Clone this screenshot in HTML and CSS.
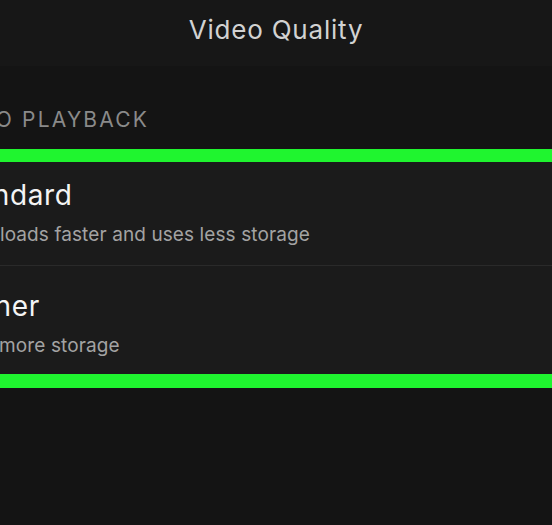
FILE: index.html
```html
<!DOCTYPE html>
<html lang="en">
<head>
  <meta charset="UTF-8" />
  <meta name="viewport" content="width=device-width, initial-scale=1" />
  <title>Video Quality</title>
  <link rel="stylesheet" href="styles.css">
</head>
<body>
  <header class="topbar">
    <h1>Video Quality</h1>
  </header>

  <main class="content">
    <h2 class="section-label">VIDEO PLAYBACK</h2>

    <div class="options">
      <div class="option">
        <div class="option-title">Standard</div>
        <div class="option-desc">Downloads faster and uses less storage</div>
      </div>
      <div class="option">
        <div class="option-title">Higher</div>
        <div class="option-desc">Uses more storage</div>
      </div>
    </div>
  </main>
</body>
</html>
```

FILE: styles.css
```css
html, body {
  margin: 0;
  height: 100%;
}
body {
  font-family: Inter, "Noto Sans", sans-serif;
  background: #141414;
  color: #f2f2f2;
  overflow: hidden;
}
.topbar {
  height: 66px;
  background: #171717;
  display: flex;
  justify-content: center;
}
.topbar h1 {
  margin: 0;
  padding-top: 13px;
  font-size: 26px;
  font-weight: 400;
  line-height: 34px;
  letter-spacing: 0.8px;
  color: #d2d2d2;
}
.content {
  margin-left: -52px;
  margin-right: -40px;
}
.section-label {
  margin: 0;
  padding: 40px 0 0 0;
  height: 43px;
  font-size: 21px;
  font-weight: 400;
  line-height: 28px;
  letter-spacing: 2.2px;
  color: #8a8a8a;
  text-indent: -9px;
}
.options {
  background: #1b1b1b;
  border-top: 13px solid #1ff52f;
  border-bottom: 14px solid #1ff52f;
}
.option {
  padding: 15px 0 0 0;
  height: 88px;
}
.option + .option {
  border-top: 1px solid #2a2a2a;
  height: 86px;
  padding-top: 22px;
}
.option-title {
  font-size: 28px;
  line-height: 36px;
  letter-spacing: 0.6px;
  color: #f4f4f4;
}
.option-desc {
  margin-top: 10px;
  font-size: 19px;
  line-height: 24px;
  letter-spacing: 0.1px;
  color: #a3a3a3;
}
```
